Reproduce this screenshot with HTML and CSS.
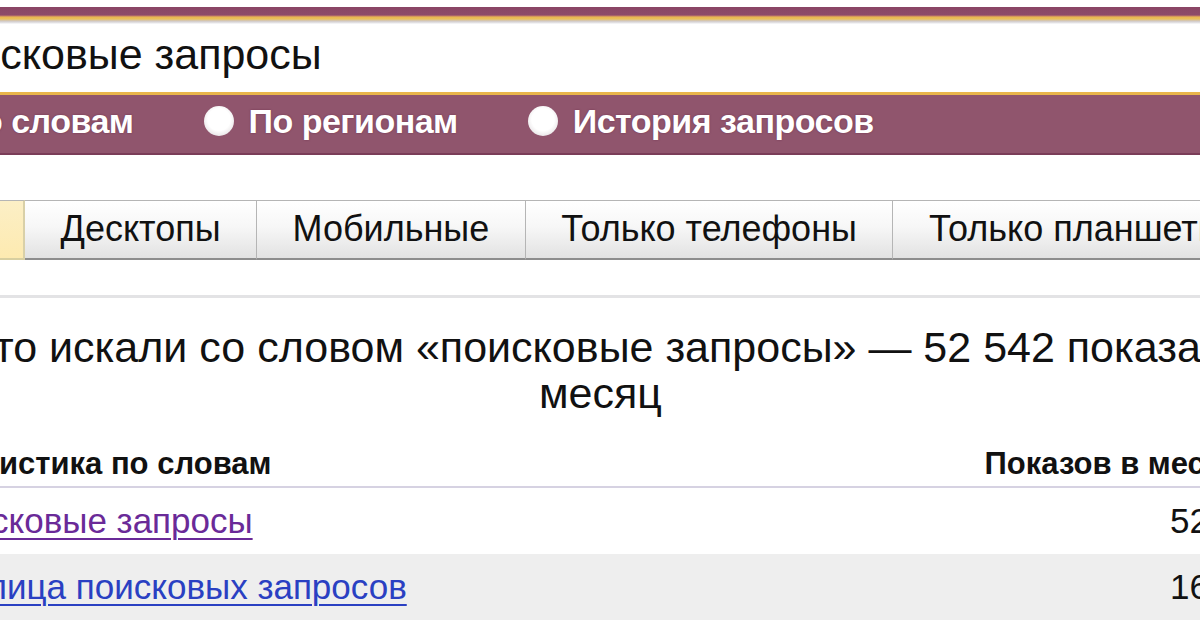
FILE: index.html
```html
<!DOCTYPE html>
<html lang="ru">
<head>
<meta charset="utf-8">
<title>Wordstat</title>
<link rel="stylesheet" href="styles.css">
</head>
<body>
<div class="page">
  <div class="topbar"></div>
  <div class="search"><span class="query">поисковые запросы</span></div>
  <div class="modes">
    <label class="mode"><span class="radio"></span><span class="mode-text">По словам</span></label>
    <label class="mode"><span class="radio"></span><span class="mode-text">По регионам</span></label>
    <label class="mode"><span class="radio"></span><span class="mode-text">История запросов</span></label>
  </div>
  <div class="tabs">
    <div class="tab tab-active">Все</div>
    <div class="tab">Десктопы</div>
    <div class="tab">Мобильные</div>
    <div class="tab">Только телефоны</div>
    <div class="tab">Только планшеты</div>
  </div>
  <div class="sep"></div>
  <h1 class="title">Что искали со словом «поисковые запросы» — 52&nbsp;542 показа в месяц</h1>
  <div class="stats">
    <div class="stats-head">
      <span class="col-word">Статистика по словам</span>
      <span class="col-num">Показов в месяц</span>
    </div>
    <div class="stats-row">
      <a class="word visited" href="#">поисковые запросы</a>
      <span class="num">52&nbsp;542</span>
    </div>
    <div class="stats-row alt">
      <a class="word" href="#">таблица поисковых запросов</a>
      <span class="num">16&nbsp;084</span>
    </div>
  </div>
</div>
</body>
</html>
```

FILE: styles.css
```css
html, body {
  margin: 0;
  padding: 0;
  overflow: hidden;
  background: #ffffff;
}
body {
  font-family: "Liberation Sans", Arial, sans-serif;
  color: #111;
}
.page {
  width: 1420px;
  margin-left: -110px;
}
.topbar {
  margin-top: 7px;
  height: 17px;
  background: linear-gradient(to bottom,
    #8a4565 0px, #8e4a69 8px, #c27a66 9px, #e7b550 10px, #ecbf5a 12px,
    #cfc7c4 14px, #e6e6ea 16px, #ffffff 17px);
}
.search {
  height: 68px;
  display: flex;
  align-items: center;
  padding-left: 39px;
  padding-bottom: 8px;
  box-sizing: border-box;
  background: #fff;
}
.query {
  font-size: 43px;
  color: #111;
}
.modes {
  height: 63px;
  border-top: 3px solid #e9b54b;
  border-bottom: 2px solid #7a3d58;
  background: #90556d;
  display: flex;
  align-items: center;
  gap: 70px;
  padding-left: 23px;
  padding-bottom: 6px;
  box-sizing: border-box;
}
.mode {
  display: flex;
  align-items: center;
  gap: 15px;
}
.radio {
  width: 30px;
  height: 30px;
  border-radius: 50%;
  background: radial-gradient(circle at 50% 45%, #ffffff 50%, #e6e2e4 80%, #b7a6ae 100%);
}
.mode-text {
  font-size: 34px;
  font-weight: bold;
  color: #fff;
  letter-spacing: -0.5px;
  text-shadow: 0 0 2px rgba(90, 30, 60, 0.6);
}
.tabs {
  margin-top: 45px;
  display: flex;
  padding-left: 50px;
  height: 60px;
}
.tab {
  display: flex;
  align-items: center;
  padding: 0 35.5px 2px;
  font-size: 36px;
  color: #111;
  border: 1px solid #b5b5b5;
  border-left: none;
  border-bottom: 2px solid #8d8d8d;
  background: linear-gradient(to bottom, #ffffff 0%, #f7f7f7 45%, #e2e2e2 100%);
  box-sizing: border-box;
}
.tab:first-child {
  border-left: 1px solid #b5b5b5;
}
.tab-active {
  background: linear-gradient(to bottom, #fcefc6 0%, #fdeab0 100%);
  border-right: 2px solid #d9d0a8;
  border-bottom-color: #d8cfa0;
  width: 85px;
  padding: 0;
  color: transparent;
}
.sep {
  margin-top: 35px;
  height: 3px;
  background: #e3e3e5;
}
.title {
  margin: 26px 0 0 0;
  text-align: center;
  font-size: 43px;
  line-height: 46px;
  font-weight: normal;
  color: #111;
  padding: 0 66px 0 67px;
}
.stats {
  margin-top: 27px;
  margin-left: 39px;
  width: 1371px;
}
.stats-head {
  display: flex;
  justify-content: space-between;
  align-items: center;
  height: 45px;
  padding-bottom: 2px;
  box-sizing: border-box;
  border-bottom: 2px solid #d6d2e2;
  font-size: 31px;
  font-weight: bold;
  color: #111;
  padding-right: 58px;
}
.stats-row {
  display: flex;
  justify-content: space-between;
  align-items: center;
  height: 66px;
  font-size: 35px;
  padding-left: 4px;
  padding-right: 23px;
}
.stats-row.alt {
  height: 66px;
  background: #eeeeee;
}
.word {
  color: #2a40c2;
  text-decoration: underline;
  text-decoration-thickness: 2px;
  text-underline-offset: 5px;
}
.word.visited {
  color: #6a2a98;
}
.num {
  color: #111;
}
```
